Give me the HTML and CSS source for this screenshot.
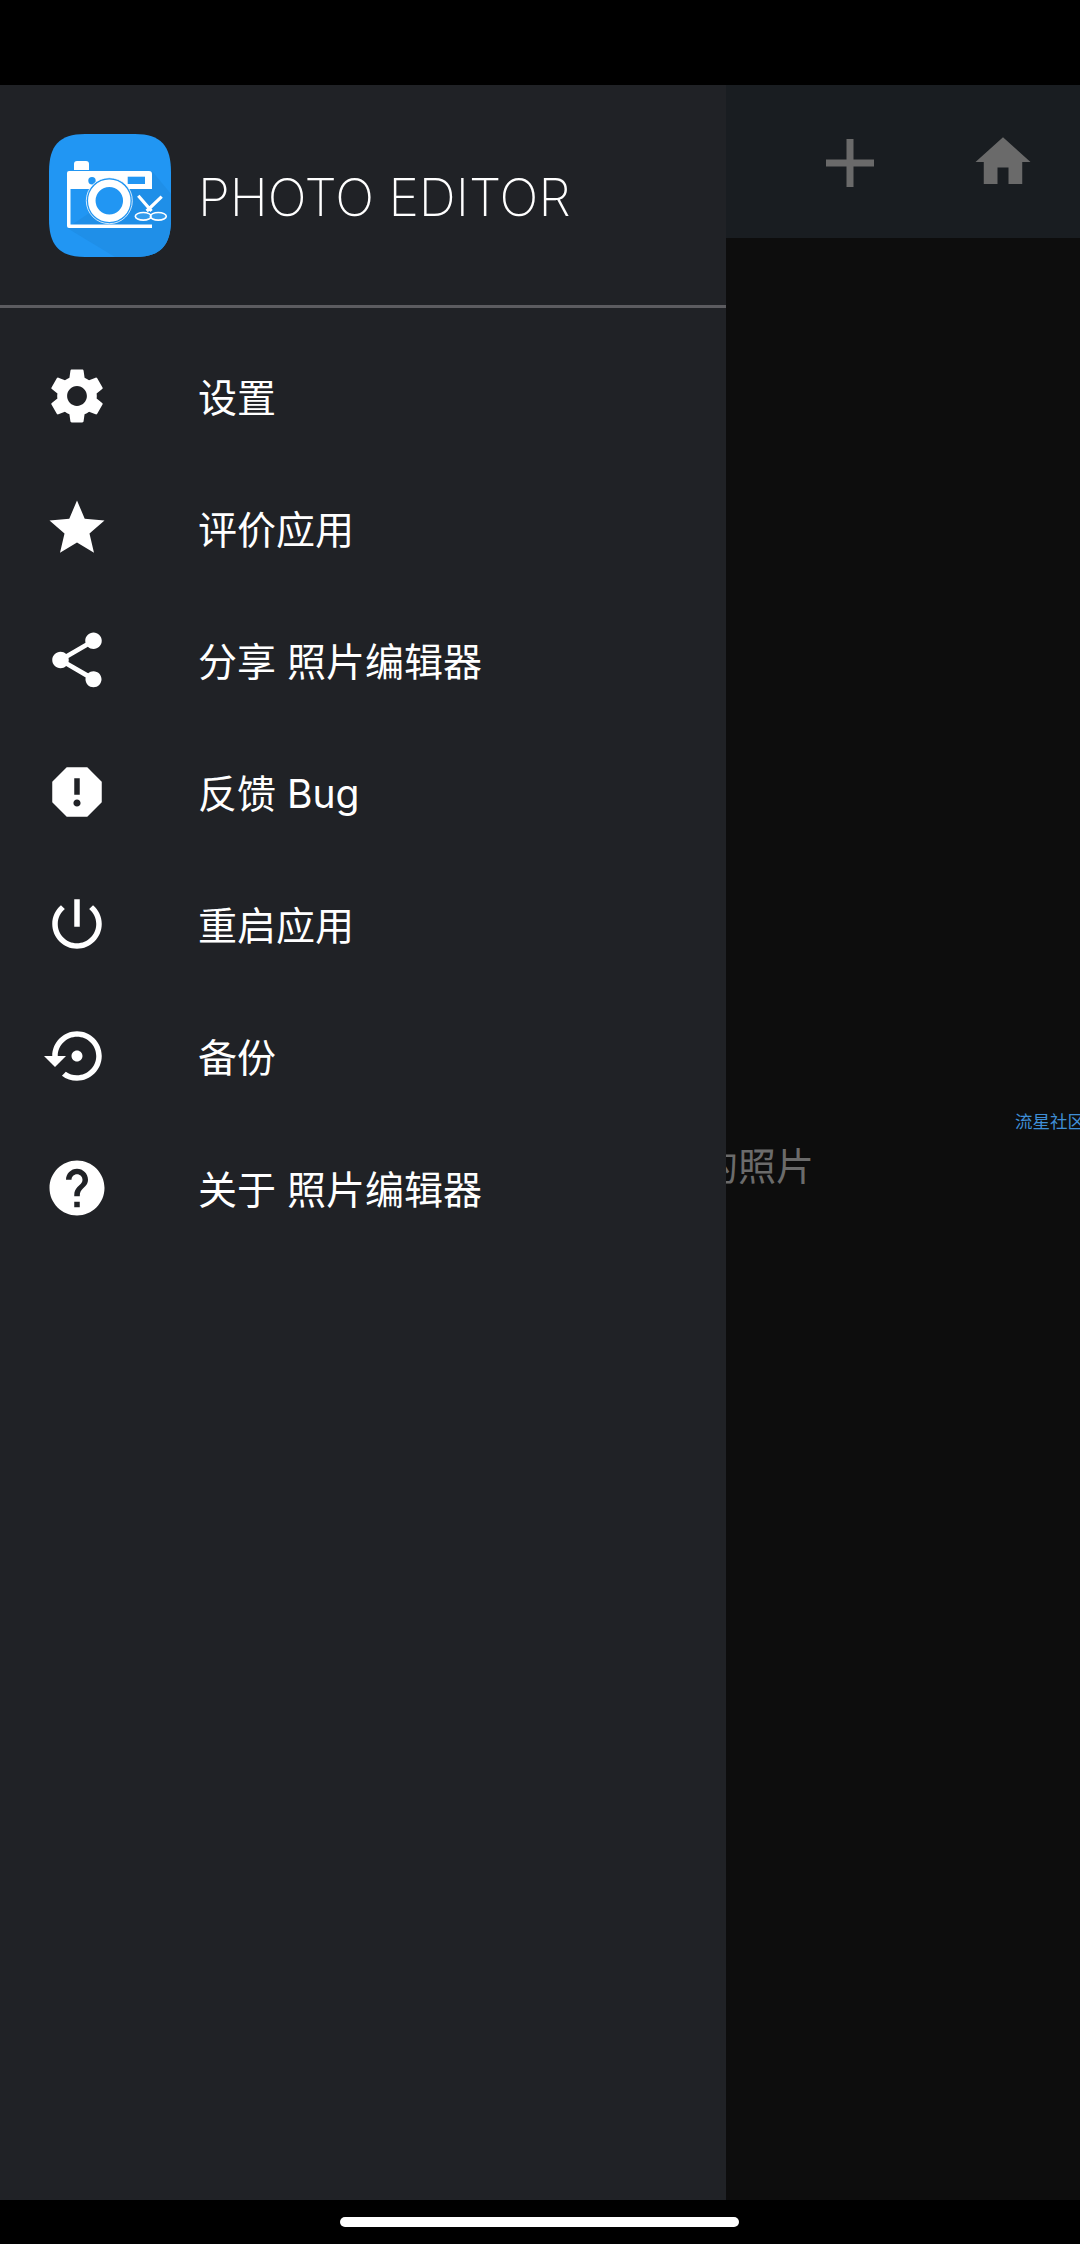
FILE: index.html
```html
<!DOCTYPE html>
<html lang="zh-CN">
<head>
<meta charset="utf-8">
<title>Photo Editor</title>
<link rel="stylesheet" href="styles.css">
</head>
<body>
<div class="status-bar"></div>
<main class="screen">
  <div class="app">
    <header class="appbar">
      <svg class="plus" viewBox="0 0 48 48"><path d="M20.5 0h7v20.5H48v7H27.5V48h-7V27.5H0v-7h20.5z"/></svg>
      <svg class="icon home" viewBox="0 0 24 24"><path d="M10 20v-6h4v6h5v-8h3L12 3 2 12h3v8z"/></svg>
    </header>
    <section class="content">
      <p class="empty">选择要编辑的照片</p>
      <span class="watermark">流星社区</span>
    </section>
  </div>
  <aside class="drawer">
    <div class="drawer-head">
      <svg class="logo" viewBox="0 0 122 123">
        <path class="logo-bg" d="M36 0H86C112 0 122 12 122 38V85C122 111 112 123 86 123H36C10 123 0 111 0 85V38C0 12 10 0 36 0Z"/>
        <path class="logo-shadow" d="M103 37 122 60V85C122 111 112 123 86 123H66L18 94Z"/>
        <path class="logo-w" d="M25 36V30Q25 27 28 27H37Q40 27 40 30V36Z"/>
        <path class="logo-w" d="M20 37H100Q103 37 103 40V55H21.5V90.5H103V94H20Q18 94 18 92V39Q18 37 20 37Z"/>
        <circle class="logo-b" cx="43" cy="46.7" r="3.7"/>
        <rect class="logo-b" x="78.7" y="42.7" width="17.3" height="7.3"/>
        <circle class="logo-halo" cx="60.3" cy="66.7" r="23"/>
        <circle class="logo-ring" cx="60.3" cy="66.7" r="17.5"/>
        <path class="logo-blade" d="M89.3 61.7 102.5 77M112.7 62.7 97.7 77"/>
        <ellipse class="logo-loop" cx="94.3" cy="82.3" rx="8" ry="3.8"/>
        <ellipse class="logo-loop" cx="109.3" cy="82.3" rx="8" ry="3.8"/>
      </svg>
      <h1 class="title">PHOTO EDITOR</h1>
    </div>
    <nav class="menu">
      <a class="item"><svg class="icon" viewBox="0 0 24 24"><path d="M19.14 12.94c.04-.3.06-.61.06-.94 0-.32-.02-.64-.07-.94l2.03-1.58c.18-.14.23-.41.12-.61l-1.92-3.32c-.12-.22-.37-.29-.59-.22l-2.39.96c-.5-.38-1.03-.7-1.62-.94l-.36-2.54c-.04-.24-.24-.41-.48-.41h-3.84c-.24 0-.43.17-.47.41l-.36 2.54c-.59.24-1.13.57-1.62.94l-2.39-.96c-.22-.08-.47 0-.59.22L2.74 8.87c-.12.21-.08.47.12.61l2.03 1.58c-.05.3-.09.63-.09.94s.02.64.07.94l-2.03 1.58c-.18.14-.23.41-.12.61l1.92 3.32c.12.22.37.29.59.22l2.39-.96c.5.38 1.03.7 1.62.94l.36 2.54c.05.24.24.41.48.41h3.84c.24 0 .44-.17.47-.41l.36-2.54c.59-.24 1.13-.56 1.62-.94l2.39.96c.22.08.47 0 .59-.22l1.92-3.32c.12-.22.07-.47-.12-.61l-2.01-1.58zM12 15.6c-1.98 0-3.6-1.62-3.6-3.6s1.62-3.6 3.6-3.6 3.6 1.62 3.6 3.6-1.62 3.6-3.6 3.6z"/></svg><span class="label">设置</span></a>
      <a class="item"><svg class="icon" viewBox="0 0 24 24"><path d="M12 17.27L18.18 21l-1.64-7.03L22 9.24l-7.19-.61L12 2 9.19 8.63 2 9.24l5.46 4.73L5.82 21z"/></svg><span class="label">评价应用</span></a>
      <a class="item"><svg class="icon" viewBox="0 0 24 24"><path d="M18 16.08c-.76 0-1.44.3-1.96.77L8.91 12.7c.05-.23.09-.46.09-.7s-.04-.47-.09-.7l7.05-4.11c.54.5 1.25.81 2.04.81 1.66 0 3-1.34 3-3s-1.34-3-3-3-3 1.34-3 3c0 .24.04.47.09.7L8.04 9.81C7.5 9.31 6.79 9 6 9c-1.66 0-3 1.34-3 3s1.34 3 3 3c.79 0 1.5-.31 2.04-.81l7.12 4.16c-.05.21-.08.43-.08.65 0 1.61 1.31 2.92 2.92 2.92 1.61 0 2.92-1.31 2.92-2.92s-1.31-2.92-2.92-2.92z"/></svg><span class="label">分享 照片编辑器</span></a>
      <a class="item"><svg class="icon" viewBox="0 0 24 24"><path d="M15.73 3H8.27L3 8.27v7.46L8.27 21h7.46L21 15.73V8.27L15.73 3zM12 17.3c-.72 0-1.3-.58-1.3-1.3 0-.72.58-1.3 1.3-1.3.72 0 1.3.58 1.3 1.3 0 .72-.58 1.3-1.3 1.3zm1-4.3h-2V7h2v6z"/></svg><span class="label">反馈 Bug</span></a>
      <a class="item"><svg class="icon" viewBox="0 0 24 24"><path d="M13 3h-2v10h2V3zm4.83 2.17l-1.42 1.42C17.99 7.86 19 9.81 19 12c0 3.87-3.13 7-7 7s-7-3.13-7-7c0-2.19 1.01-4.14 2.58-5.42L6.17 5.17C4.23 6.82 3 9.26 3 12c0 4.97 4.03 9 9 9s9-4.03 9-9c0-2.74-1.23-5.18-3.17-6.83z"/></svg><span class="label">重启应用</span></a>
      <a class="item"><svg class="icon" viewBox="0 0 24 24"><path d="M14 12c0-1.1-.9-2-2-2s-2 .9-2 2 .9 2 2 2 2-.9 2-2zm-2-9c-4.97 0-9 4.03-9 9H0l4 4 4-4H5c0-3.87 3.13-7 7-7s7 3.13 7 7-3.13 7-7 7c-1.51 0-2.91-.49-4.06-1.3l-1.42 1.44C8.04 20.3 9.94 21 12 21c4.97 0 9-4.03 9-9s-4.03-9-9-9z"/></svg><span class="label">备份</span></a>
      <a class="item"><svg class="icon" viewBox="0 0 24 24"><path d="M12 2C6.48 2 2 6.48 2 12s4.48 10 10 10 10-4.48 10-10S17.52 2 12 2zm1 17h-2v-2h2v2zm2.07-7.75l-.9.92C13.45 12.9 13 13.5 13 15h-2v-.5c0-1.1.45-2.1 1.17-2.83l1.24-1.26c.37-.36.59-.86.59-1.41 0-1.1-.9-2-2-2s-2 .9-2 2H8c0-2.21 1.79-4 4-4s4 1.79 4 4c0 .88-.36 1.68-.93 2.25z"/></svg><span class="label">关于 照片编辑器</span></a>
    </nav>
  </aside>
</main>
<div class="nav-bar"><div class="home-pill"></div></div>
</body>
</html>
```
FILE: styles.css
```css
* { box-sizing: border-box; }
html, body { margin: 0; height: 100%; }
body {
  width: 1080px;
  height: 2244px;
  display: flex;
  flex-direction: column;
  background: #000;
  overflow: hidden;
  font-family: Inter, "Noto Sans CJK SC", sans-serif;
}
.status-bar { height: 85px; flex: none; background: #000; }
.screen { flex: 1; position: relative; overflow: hidden; }
.app { height: 100%; display: flex; flex-direction: column; background: #0d0d0d; }
.appbar {
  height: 153px;
  flex: none;
  display: flex;
  justify-content: flex-end;
  align-items: center;
  gap: 96px;
  padding-right: 44px;
  background: #191d21;
}
.appbar svg path { fill: #6a6a6a; }
.plus { width: 48px; height: 48px; margin-top: 3px; }
.content { flex: 1; position: relative; padding: 900px 266px 0 0; overflow: hidden; }
.empty {
  margin: 0;
  text-align: right;
  font-size: 38px;
  line-height: 56px;
  color: #6b6b6b;
}
.watermark {
  position: absolute;
  left: 1015px;
  top: 872px;
  font-size: 17.5px;
  line-height: 24px;
  white-space: nowrap;
  color: #3f8ed6;
}
.drawer {
  position: absolute;
  left: 0;
  top: 0;
  bottom: 0;
  width: 726px;
  background: #202226;
}
.drawer-head {
  height: 223px;
  display: flex;
  align-items: center;
  gap: 27px;
  padding: 0 0 0 49px;
  border-bottom: 3px solid #5c5c60;
}
.logo { width: 122px; height: 123px; flex: none; }
.logo-bg { fill: #2196f3; }
.logo-shadow { fill: #1f8fe8; }
.logo-w { fill: #fff; }
.logo-b { fill: #2196f3; }
.logo-halo { fill: #2196f3; stroke: #fff; stroke-width: 0.8; }
.logo-ring { fill: #2196f3; stroke: #fff; stroke-width: 7.5; }
.logo-blade { fill: none; stroke: #fff; stroke-width: 3.2; }
.logo-loop { fill: #5db5f5; fill-opacity: .35; stroke: #fff; stroke-width: 1.6; }
.title {
  margin: 0;
  padding-top: 3px;
  font-family: Inter, sans-serif;
  font-weight: 200;
  font-size: 51.5px;
  line-height: 60px;
  color: #fff;
  white-space: nowrap;
}
.menu { padding-top: 22px; display: flex; flex-direction: column; }
.item {
  height: 132px;
  display: flex;
  align-items: center;
  gap: 88px;
  padding-left: 44px;
  color: #fff;
}
.icon { width: 66px; height: 66px; flex: none; }
.item .icon path { fill: #fff; }
.label { font-size: 39px; line-height: 50px; padding-top: 4px; white-space: pre; }
.nav-bar { height: 44px; flex: none; padding: 17px 0 0 340px; background: #000; }
.home-pill { width: 399px; height: 10px; border-radius: 5px; background: #fff; }
```
